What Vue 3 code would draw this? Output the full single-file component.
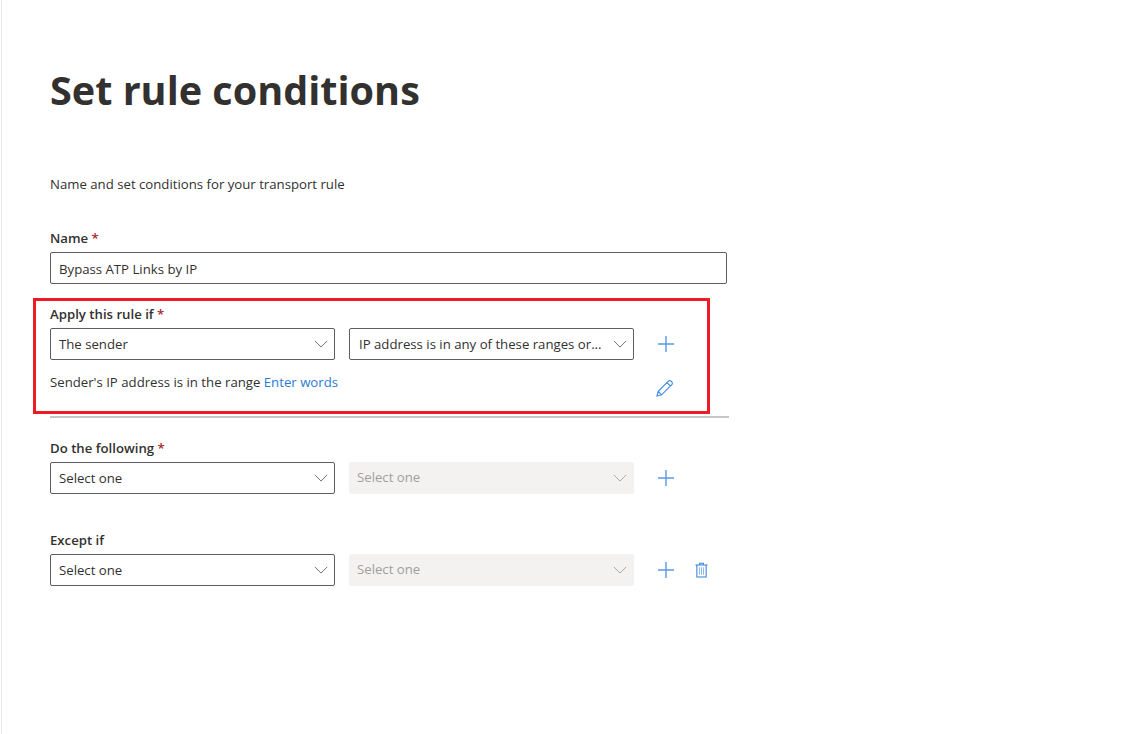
<script setup>
const plus = 'M8 0v16M0 8h16'
</script>

<template>
  <div class="page">
    <h1 class="title">Set rule conditions</h1>
    <p class="intro">Name and set conditions for your transport rule</p>

    <label class="label name-label">Name <span class="req">*</span></label>
    <div class="input">Bypass ATP Links by IP</div>

    <section class="highlight">
      <label class="label">Apply this rule if <span class="req">*</span></label>
      <div class="row">
        <div class="select"><span class="val">The sender</span><svg class="chev" viewBox="0 0 16 9"><path d="M1 1l7 7 7-7" /></svg></div>
        <div class="select"><span class="val wide">IP address is in any of these ranges or...</span><svg class="chev" viewBox="0 0 16 9"><path d="M1 1l7 7 7-7" /></svg></div>
        <svg class="plus" viewBox="0 0 16 16"><path :d="plus" /></svg>
      </div>
      <div class="desc-row">
        <p class="desc">Sender's IP address is in the range <a class="link">Enter words</a></p>
        <svg class="pencil" viewBox="0 0 17 17"><path d="M1 16l1.2-4.6L12.4 1.2a1.9 1.9 0 0 1 2.7 0l.7.7a1.9 1.9 0 0 1 0 2.7L5.6 14.8zM2.2 11.4l3.4 3.4M11 2.6l3.4 3.4" /></svg>
      </div>
    </section>
    <div class="rule"></div>

    <label class="label do-label">Do the following <span class="req">*</span></label>
    <div class="row">
      <div class="select"><span class="val">Select one</span><svg class="chev" viewBox="0 0 16 9"><path d="M1 1l7 7 7-7" /></svg></div>
      <div class="select off"><span class="val">Select one</span><svg class="chev" viewBox="0 0 16 9"><path d="M1 1l7 7 7-7" /></svg></div>
      <svg class="plus" viewBox="0 0 16 16"><path :d="plus" /></svg>
    </div>

    <label class="label except-label">Except if</label>
    <div class="row">
      <div class="select"><span class="val">Select one</span><svg class="chev" viewBox="0 0 16 9"><path d="M1 1l7 7 7-7" /></svg></div>
      <div class="select off"><span class="val">Select one</span><svg class="chev" viewBox="0 0 16 9"><path d="M1 1l7 7 7-7" /></svg></div>
      <svg class="plus" viewBox="0 0 16 16"><path :d="plus" /></svg>
      <svg class="trash" viewBox="0 0 14 16"><path d="M.5 2.5h13M5 2.5V.8h4v1.7M2 2.5v13h10v-13" /><path class="bars" d="M4.8 5v8M7 5v8M9.2 5v8" /></svg>
    </div>
  </div>
</template>

<style scoped>
.page {
  box-sizing: border-box;
  width: 1139px;
  height: 734px;
  margin-left: 1px;
  border-left: 1px solid #edebe9;
  padding: 62px 0 0 48px;
  background: #fff;
  overflow: hidden;
  color: #323130;
  font-family: "Open Sans", "Noto Sans", sans-serif;
  font-size: 13.2px;
}
.title {
  margin: 0;
  font-size: 39.6px;
  line-height: 56px;
  font-weight: 700;
  color: #323130;
}
.intro {
  margin: 56px 0 0;
  line-height: 20px;
}
.label {
  display: block;
  font-weight: 600;
  line-height: 20px;
}
.name-label { margin-top: 34px; }
.req { color: #a4262c; }
.input {
  box-sizing: border-box;
  width: 677px;
  height: 32px;
  margin-top: 4px;
  padding: 0 8px;
  border: 1px solid #605e5c;
  border-radius: 2px;
  line-height: 32px;
}
.highlight {
  box-sizing: border-box;
  width: 677px;
  height: 116px;
  margin: 14px 0 0 -17px;
  padding: 3px 0 0 14px;
  border: 3px solid #ed1c24;
}
.row {
  display: flex;
  align-items: center;
  gap: 14px;
  margin-top: 4px;
}
.select {
  box-sizing: border-box;
  display: flex;
  align-items: center;
  justify-content: space-between;
  width: 285px;
  height: 32px;
  padding: 0 6px 0 8px;
  border: 1px solid #605e5c;
  border-radius: 2px;
}
.val.wide { margin-left: 1px; }
.select.off {
  padding-left: 7px;
  border-color: #f3f2f1;
  background: #f3f2f1;
  color: #a19f9d;
}
.off .val { margin-top: -2px; }
.chev {
  width: 14px;
  height: 8px;
  fill: none;
  stroke: #605e5c;
  stroke-width: 1;
}
.off .chev { stroke: #a19f9d; }
.plus {
  width: 16px;
  height: 16px;
  margin-left: 10px;
  fill: none;
  stroke: #5b98e6;
  stroke-width: 1.4;
}
.trash {
  width: 13px;
  height: 16px;
  margin-left: 7px;
  fill: none;
  stroke: #2f7fe0;
  stroke-width: 1.1;
}
.trash .bars { stroke: #8db6ea; }
.desc-row {
  display: flex;
  align-items: flex-start;
  justify-content: space-between;
  width: 623px;
  margin-top: 12px;
}
.desc { margin: 0; line-height: 20px; }
.link { color: #2b7cd3; }
.pencil {
  width: 17px;
  height: 17px;
  margin-top: 8px;
  fill: none;
  stroke: #3f8ae4;
  stroke-width: 1.15;
}
.rule {
  width: 679px;
  height: 2px;
  margin-top: 2px;
  background: #c8c6c4;
}
.do-label { margin-top: 20px; }
.except-label { margin-top: 36px; }
</style>
